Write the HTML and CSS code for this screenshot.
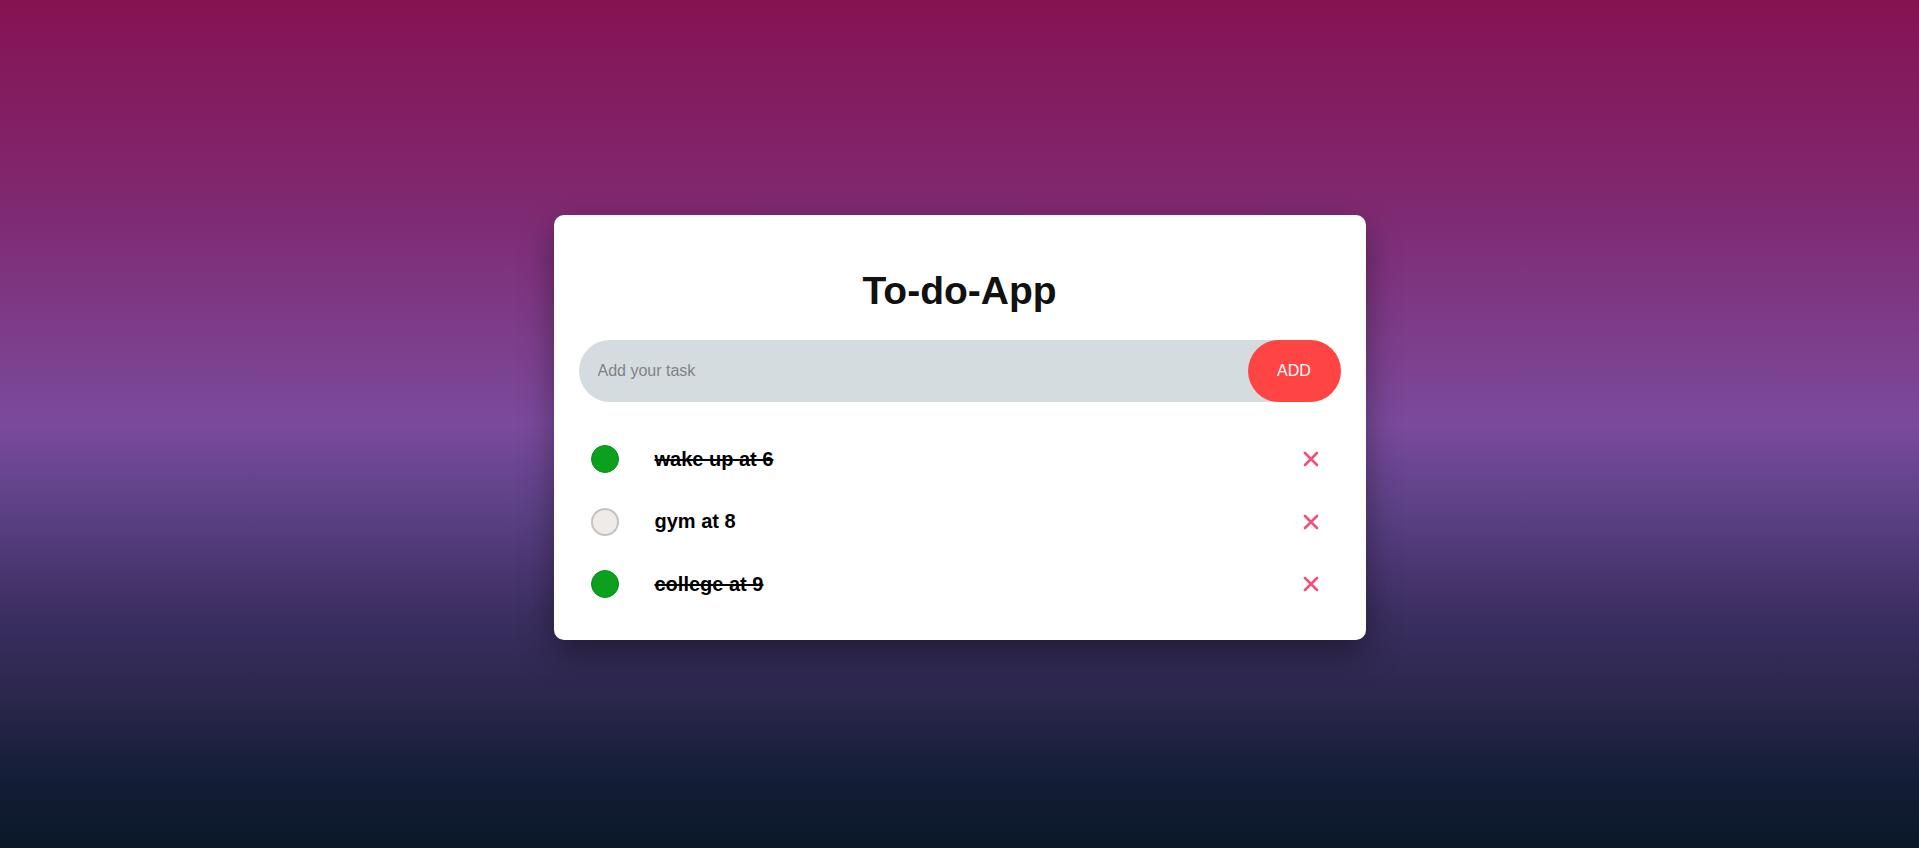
FILE: index.html
```html
<!DOCTYPE html>
<html lang="en">
<head>
<meta charset="utf-8">
<title>To-do-App</title>
<link rel="stylesheet" href="styles.css">
</head>
<body>
  <div class="container">
    <div class="todo-app">
      <h2 class="title">To-do-App</h2>
      <div class="row">
        <input class="task-input" type="text" placeholder="Add your task">
        <button class="add-btn">ADD</button>
      </div>
      <ul class="list">
        <li class="item checked">
          <span class="check"></span>
          <span class="text">wake up at 6</span>
          <span class="remove"><svg viewBox="0 0 16 16" width="16" height="16"><path d="M2 2L14 14M14 2L2 14" stroke="#f2507b" stroke-width="2.6" stroke-linecap="round"/></svg></span>
        </li>
        <li class="item">
          <span class="check"></span>
          <span class="text">gym at 8</span>
          <span class="remove"><svg viewBox="0 0 16 16" width="16" height="16"><path d="M2 2L14 14M14 2L2 14" stroke="#f2507b" stroke-width="2.6" stroke-linecap="round"/></svg></span>
        </li>
        <li class="item checked">
          <span class="check"></span>
          <span class="text">college at 9</span>
          <span class="remove"><svg viewBox="0 0 16 16" width="16" height="16"><path d="M2 2L14 14M14 2L2 14" stroke="#f2507b" stroke-width="2.6" stroke-linecap="round"/></svg></span>
        </li>
      </ul>
    </div>
  </div>
</body>
</html>
```
FILE: styles.css
```css
* {
  box-sizing: border-box;
}

html, body {
  margin: 0;
  height: 100%;
}

body {
  font-family: "Liberation Sans", Arial, sans-serif;
  background: linear-gradient(to bottom,
    #861252 0%,
    #7f2a72 25%,
    #7b4a9c 50%,
    #5c4186 60%,
    #3c2f62 72%,
    #2d284f 81%,
    #141d36 92%,
    #0a1828 100%);
}

.container {
  height: 100%;
  display: flex;
  align-items: center;
  justify-content: center;
  padding-top: 7px;
}

.todo-app {
  width: 812px;
  background: #fff;
  border-radius: 10px;
  padding: 54px 25px 25px;
  box-shadow: 0 14px 34px rgba(0, 0, 0, 0.38);
}

.title {
  margin: 0 0 27px;
  text-align: center;
  font-size: 39px;
  font-weight: bold;
  color: #111;
  line-height: 44px;
}

.row {
  display: flex;
  align-items: center;
  height: 62px;
  background: #d4dce0;
  border-radius: 31px;
}

.task-input {
  flex: 1;
  height: 100%;
  border: none;
  outline: none;
  background: transparent;
  padding: 0 0 0 19px;
  font-family: "Liberation Sans", Arial, sans-serif;
  font-size: 16px;
  color: #333;
}

.task-input::placeholder {
  color: #7f8386;
}

.add-btn {
  width: 93px;
  height: 62px;
  border: none;
  border-radius: 40px;
  background: #ff4444;
  color: #fff;
  font-family: "Liberation Sans", Arial, sans-serif;
  font-size: 16px;
  font-weight: normal;
  padding: 0;
}

.list {
  list-style: none;
  margin: 26px 0 0;
  padding: 0;
}

.item {
  display: flex;
  align-items: center;
  height: 62px;
  padding: 0 22px 0 12px;
}

.item:nth-child(2) {
  height: 63px;
}

.check {
  width: 28px;
  height: 28px;
  border-radius: 50%;
  background: #efebe9;
  border: 2px solid #c6c2c0;
  flex: none;
}

.item.checked .check {
  background: #0ba01d;
  border: 1.5px solid #0b8a1b;
}

.text {
  flex: 1;
  margin-left: 36px;
  font-size: 20px;
  font-weight: bold;
  color: #000;
}

.item.checked .text {
  text-decoration: line-through;
}

.remove {
  width: 16px;
  height: 16px;
  display: flex;
}
```
